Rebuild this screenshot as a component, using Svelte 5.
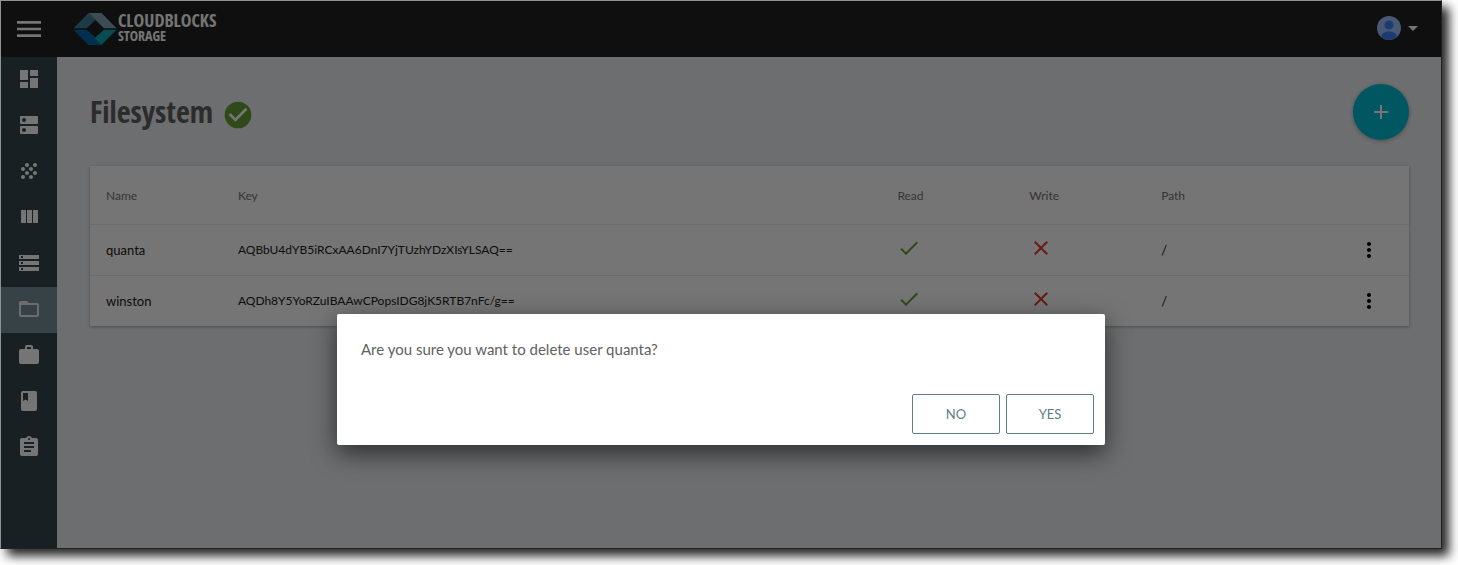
<script>
  const nav = [
    { label: 'Dashboard', d: 'M3 13h8V3H3v10zm0 8h8v-6H3v6zm10 0h8V11h-8v10zm0-18v6h8V3h-8z' },
    { label: 'Servers', d: 'M20 13H4c-.55 0-1 .45-1 1v6c0 .55.45 1 1 1h16c.55 0 1-.45 1-1v-6c0-.55-.45-1-1-1zM7 19c-1.1 0-2-.9-2-2s.9-2 2-2 2 .9 2 2-.9 2-2 2zM20 3H4c-.55 0-1 .45-1 1v6c0 .55.45 1 1 1h16c.55 0 1-.45 1-1V4c0-.55-.45-1-1-1zM7 9c-1.1 0-2-.9-2-2s.9-2 2-2 2 .9 2 2-.9 2-2 2z' },
    { label: 'Placement', d: 'M10 12c-1.1 0-2 .9-2 2s.9 2 2 2 2-.9 2-2-.9-2-2-2zM6 8c-1.1 0-2 .9-2 2s.9 2 2 2 2-.9 2-2-.9-2-2-2zm0 8c-1.1 0-2 .9-2 2s.9 2 2 2 2-.9 2-2-.9-2-2-2zm12-8c1.1 0 2-.9 2-2s-.9-2-2-2-2 .9-2 2 .9 2 2 2zm-4 8c-1.1 0-2 .9-2 2s.9 2 2 2 2-.9 2-2-.9-2-2-2zm4-4c-1.1 0-2 .9-2 2s.9 2 2 2 2-.9 2-2-.9-2-2-2zm-4-4c-1.1 0-2 .9-2 2s.9 2 2 2 2-.9 2-2-.9-2-2-2zm-4-4c-1.1 0-2 .9-2 2s.9 2 2 2 2-.9 2-2-.9-2-2-2z' },
    { label: 'Pools', d: 'M10 18h5V5h-5v13zm-6 0h5V5H4v13zM16 5v13h5V5h-5z' },
    { label: 'Block storage', d: 'M2 20h20v-4H2v4zm2-3h2v2H4v-2zM2 4v4h20V4H2zm4 3H4V5h2v2zm-4 7h20v-4H2v4zm2-3h2v2H4v-2z' },
    { label: 'Filesystem', active: true, d: 'M20 6h-8l-2-2H4c-1.1 0-1.99.9-1.99 2L2 18c0 1.1.9 2 2 2h16c1.1 0 2-.9 2-2V8c0-1.1-.9-2-2-2zm0 12H4V8h16v10z' },
    { label: 'Objects', d: 'M20 6h-4V4c0-1.11-.89-2-2-2h-4c-1.11 0-2 .89-2 2v2H4c-1.11 0-1.99.89-1.99 2L2 19c0 1.11.89 2 2 2h16c1.11 0 2-.89 2-2V8c0-1.11-.89-2-2-2zm-6 0h-4V4h4v2z' },
    { label: 'Guide', d: 'M18 2H6c-1.1 0-2 .9-2 2v16c0 1.1.9 2 2 2h12c1.1 0 2-.9 2-2V4c0-1.1-.9-2-2-2zM6 4h5v8l-2.5-1.5L6 12V4z' },
    { label: 'Logs', d: 'M19 3h-4.18C14.4 1.84 13.3 1 12 1c-1.3 0-2.4.84-2.82 2H5c-1.1 0-2 .9-2 2v14c0 1.1.9 2 2 2h14c1.1 0 2-.9 2-2V5c0-1.1-.9-2-2-2zm-7 0c.55 0 1 .45 1 1s-.45 1-1 1-1-.45-1-1 .45-1 1-1zm2 14H7v-2h7v2zm3-4H7v-2h10v2zm0-4H7V7h10v2z' }
  ];
  const users = [
    { name: 'quanta', key: 'AQBbU4dYB5iRCxAA6DnI7YjTUzhYDzXIsYLSAQ==', read: true, write: false, path: '/' },
    { name: 'winston', key: 'AQDh8Y5YoRZuIBAAwCPopsIDG8jK5RTB7nFc/g==', read: true, write: false, path: '/' }
  ];
  let confirming = $state(true);
</script>

{#snippet flag(on)}
  <svg class="flag" class:on viewBox="0 0 24 24" role="img" aria-label={on ? 'Yes' : 'No'}>
    {#if on}
      <path d="M9 16.17L4.83 12l-1.42 1.41L9 19 21 7l-1.41-1.41z" />
    {:else}
      <path d="M19 6.41L17.59 5 12 10.59 6.41 5 5 6.41 10.59 12 5 17.59 6.41 19 12 13.41 17.59 19 19 17.59 13.41 12z" />
    {/if}
  </svg>
{/snippet}

<div class="page">
  <div class="window">
    <header>
      <button class="menu" aria-label="Menu">
        <svg viewBox="0 0 24 24"><path d="M3 18h18v-2H3v2zm0-5h18v-2H3v2zm0-7v2h18V6H3z" /></svg>
      </button>
      <a class="brand" href="#home">
        <svg viewBox="0 0 44 34" aria-hidden="true">
          <path fill="#447f9c" d="M0.500 16.200L15.500 1L22.500 8L13.500 16.200z" />
          <path fill="#86a5b6" d="M15.500 1H28.500L43.500 16.200H31z" />
          <path fill="#0068ad" d="M0.500 17.800H13.500L22.500 25.500L29 33H15.500z" />
          <path fill="#0ea5b0" d="M31 17.800H43.500L28.500 33L21.800 25.800z" />
        </svg>
        <span class="words"><span class="big">CLOUDBLOCKS</span><span class="small">STORAGE</span></span>
      </a>
      <button class="account" aria-label="Account">
        <svg class="avatar" viewBox="0 0 24 24">
          <circle cx="12" cy="12" r="12" fill="#9dc0ff" />
          <circle cx="12" cy="9" r="4.500" fill="#4080f5" />
          <path fill="#4080f5" d="M4.500 21.300v-1.300c0-3 4-4.500 7.500-4.500s7.500 1.500 7.500 4.500v1.300A12 12 0 0 1 4.500 21.300z" />
        </svg>
        <svg class="caret" viewBox="0 0 10 5"><path d="M0 0h10L5 5z" /></svg>
      </button>
    </header>
    <div class="body">
      <nav>
        {#each nav as item}
          <a href="#{item.label}" class:active={item.active} aria-label={item.label}>
            <svg viewBox="0 0 24 24"><path d={item.d} /></svg>
          </a>
        {/each}
      </nav>
      <main>
        <div class="title">
          <h1>Filesystem</h1>
          <svg class="ok" viewBox="0 0 24 24" role="img" aria-label="Healthy">
            <circle cx="12" cy="12" r="10" fill="#689f38" />
            <path fill="#fff" d="M10 17l-5-5 1.410-1.410L10 14.170l7.590-7.590L19 8z" />
          </svg>
          <button class="add" aria-label="Add user">
            <svg viewBox="0 0 24 24"><path d="M19 13h-6v6h-2v-6H5v-2h6V5h2v6h6v2z" /></svg>
          </button>
        </div>
        <table>
          <thead>
            <tr><th>Name</th><th class="wide">Key</th><th>Read</th><th>Write</th><th>Path</th><th aria-label="Actions"></th></tr>
          </thead>
          <tbody>
            {#each users as u}
              <tr>
                <td>{u.name}</td>
                <td class="key">{u.key}</td>
                <td>{@render flag(u.read)}</td>
                <td>{@render flag(u.write)}</td>
                <td>{u.path}</td>
                <td class="actions">
                  <button aria-label="Actions for {u.name}">
                    <svg viewBox="0 0 24 24"><path d="M12 8c1.100 0 2-.9 2-2s-.9-2-2-2-2 .9-2 2 .9 2 2 2zm0 2c-1.100 0-2 .9-2 2s.9 2 2 2 2-.9 2-2-.9-2-2-2zm0 6c-1.100 0-2 .9-2 2s.9 2 2 2 2-.9 2-2-.9-2-2-2z" /></svg>
                  </button>
                </td>
              </tr>
            {/each}
          </tbody>
        </table>
      </main>
    </div>
    {#if confirming}
      <div class="backdrop">
        <div class="modal" role="dialog" aria-modal="true" aria-labelledby="question">
          <p id="question">Are you sure you want to delete user quanta?</p>
          <div class="buttons">
            <button onclick={() => (confirming = false)}>NO</button>
            <button onclick={() => (confirming = false)}>YES</button>
          </div>
        </div>
      </div>
    {/if}
  </div>
</div>

<style>
  :global(body) { background: #fff; }
  .page, .page * { box-sizing: border-box; }
  .page {
    display: flex;
    min-height: 100vh;
    padding: 0 16px 16px 0;
    font-family: Lato, sans-serif;
    overflow: hidden;
  }
  .window {
    position: relative;
    flex: 1;
    display: flex;
    flex-direction: column;
    border: 1px solid #8f9192;
    border-right-color: #222;
    border-bottom-color: #222;
    box-shadow: 7px 7px 10px rgba(0, 0, 0, 0.85);
    background: #eceff1;
  }
  button {
    border: 0;
    padding: 0;
    background: none;
    font: inherit;
    cursor: pointer;
  }
  svg { display: block; width: 24px; height: 24px; fill: currentColor; }
  header {
    display: flex;
    align-items: center;
    height: 56px;
    padding-right: 23px;
    background: #212121;
    color: #fff;
  }
  .menu { width: 56px; display: grid; place-items: center; color: inherit; }
  .menu svg { width: 32px; height: 32px; }
  .brand { display: flex; align-items: center; gap: 1px; margin-left: 16px; color: inherit; text-decoration: none; }
  .brand svg { width: 44px; height: 34px; }
  .words { display: flex; flex-direction: column; padding-bottom: 2px; font-family: "Open Sans Condensed", "Liberation Sans Narrow", sans-serif; font-weight: 700; }
  .big { font-size: 18px; line-height: 15px; }
  .small { font-size: 14px; line-height: 15px; }
  .account { display: flex; align-items: center; gap: 7px; margin-left: auto; padding-bottom: 2px; color: inherit; }
  .caret { width: 10px; height: 5px; }
  .body { flex: 1; display: flex; }
  nav { width: 56px; background: #37474f; }
  nav a { display: grid; place-items: center; height: 46px; padding-bottom: 2px; color: #fff; }
  nav a.active { background: #78909c; color: #e8ecee; }
  main { flex: 1; padding: 27px 32px 32px 33px; }
  .title { display: flex; align-items: center; height: 56px; margin-bottom: 26px; }
  h1 { margin: 0 9px 0 0; font: 700 30px/40px "Open Sans Condensed", "Liberation Sans Narrow", sans-serif; color: #616161; }
  .ok { width: 32px; height: 32px; margin-top: 6px; }
  .add {
    display: grid;
    place-items: center;
    width: 56px;
    height: 56px;
    margin-left: auto;
    border-radius: 50%;
    background: #00bcd4;
    color: #fff;
    box-shadow: 0 1px 4px rgba(0, 0, 0, 0.3);
  }
  table {
    width: 100%;
    table-layout: fixed;
    border-collapse: collapse;
    background: #fff;
    box-shadow: 0 1px 3px rgba(0, 0, 0, 0.3);
    font-size: 13px;
    text-align: left;
  }
  th, td { padding: 0 16px; }
  th { height: 58px; padding-top: 2px; color: #757575; font-size: 12px; font-weight: 400; }
  th.wide { width: 50%; }
  td { height: 51px; border-top: 1px solid #e6e9eb; color: #212121; }
  td.key { font-size: 12px; }
  .flag { margin-bottom: 3px; color: #e53935; }
  .flag.on { color: #689f38; }
  .actions button { display: block; margin: 0 12px 0 auto; color: #000; }
  .backdrop {
    position: absolute;
    inset: 0;
    display: flex;
    align-items: flex-end;
    justify-content: center;
    padding-bottom: 103px;
    background: rgba(0, 0, 0, 0.54);
  }
  .modal {
    width: 768px;
    max-width: 90%;
    border-radius: 2px;
    background: #fff;
    box-shadow: 0 8px 24px rgba(0, 0, 0, 0.6);
  }
  p { margin: 0; padding: 23px 24px 0; font-size: 15px; line-height: 24px; color: #616161; }
  .buttons { display: flex; justify-content: flex-end; gap: 6px; padding: 33px 11px 11px; }
  .buttons button {
    width: 88px;
    height: 40px;
    border: 1px solid #607d8b;
    border-radius: 2px;
    color: #607d8b;
    font-size: 13px;
  }
</style>
